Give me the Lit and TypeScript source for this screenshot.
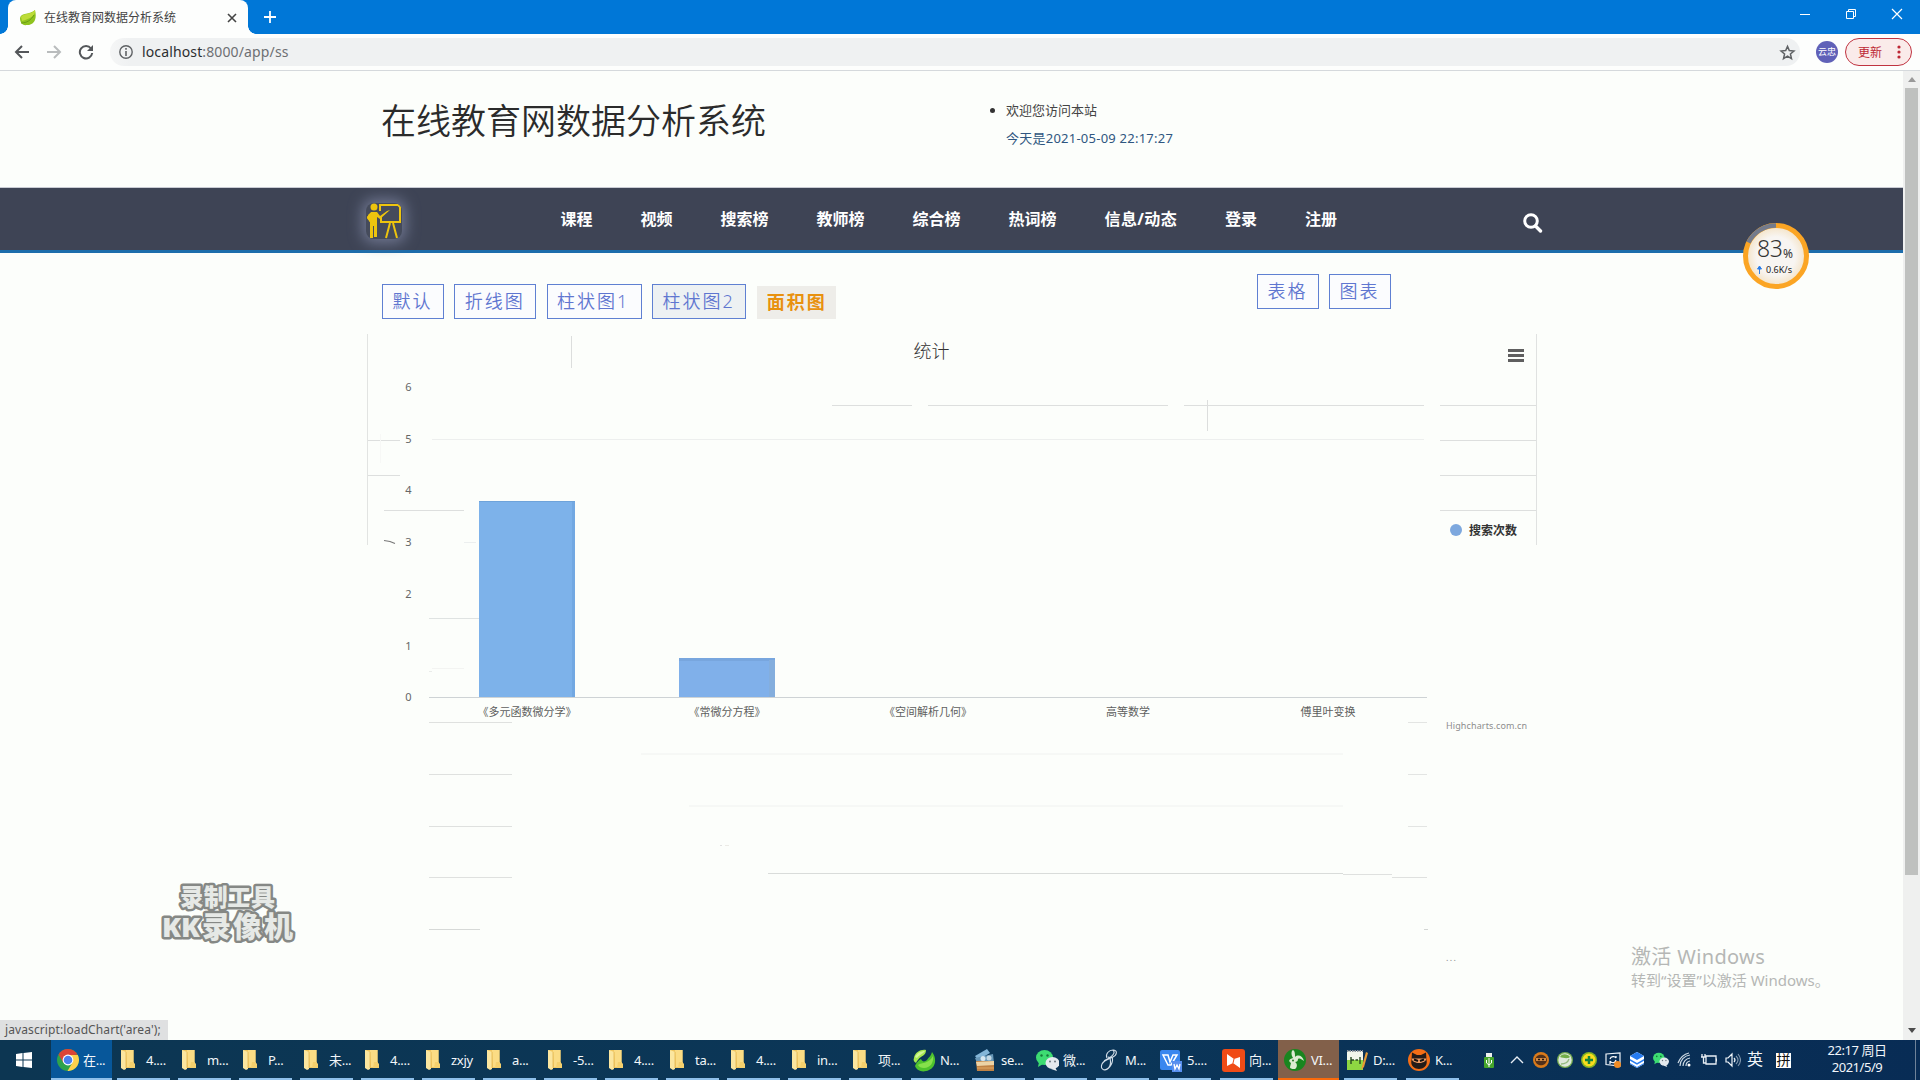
import { LitElement, html, css, svg } from "lit";
import { customElement } from "lit/decorators.js";

const folder = svg`<path d="M0 1h12.500v13l1.500 2v3H2z" fill="#f0c65f"/><path d="M5 1h7.500v12.500L14 15.500V18H6z" fill="#fbdc84"/><path d="M0 1l5 2v17l-2 1-3-2z" fill="#fbe69f"/><path d="M5 3v16" stroke="#e2b44e" stroke-width=".8"/><path d="M9 13h3.500l1.500 2.500V19H8z" fill="#f5d06d"/>`;
const wechat = svg`<ellipse cx="8.500" cy="8.500" rx="8.500" ry="7.500" fill="#3ddc72"/><path d="M3 13l-1 5 5-3z" fill="#3ddc72"/><circle cx="5.500" cy="6.500" r="1.200" fill="#17783a"/><circle cx="11.500" cy="6.500" r="1.200" fill="#17783a"/><ellipse cx="16.500" cy="14" rx="7" ry="6" fill="#e4e9ee"/><path d="M19 18l2 4-6-2z" fill="#e4e9ee"/><circle cx="14" cy="12.500" r="1" fill="#6b7780"/><circle cx="19" cy="12.500" r="1" fill="#6b7780"/>`;

const apps: Record<string, unknown> = {
  folder,
  wechat,
  chrome: svg`<circle cx="11" cy="11" r="11" fill="#2ea24c"/><path d="M1.500 5.500A11 11 0 0 1 20.500 5.500L11 7z" fill="#db4437"/><path d="M11 6h9.800A11 11 0 0 1 10.500 22L15.500 13.500z" fill="#fdd04c"/><path d="M1.500 5.500L6.500 14 11 6.500z" fill="#db4437"/><circle cx="11" cy="11" r="5.400" fill="#fff"/><circle cx="11" cy="11" r="4.300" fill="#4a7fee"/>`,
  navicat: svg`<path d="M1 9C2 3 8 0 13 1c0 4-2 5-5 7-2 1-4 4-5 6C1 13 0 11 1 9z" fill="#a6e84e"/><path d="M2 8C4 4 8 2 12 2c-2 3-6 4-8 7z" fill="#d3f69a"/><path d="M2 17c1-3 4-6 6-7 1 3 4 3 6 1 2-3 4-4 5-8 5 6 4 15-3 18-6 3-12 1-14-4z" fill="#4ec22d"/><path d="M5 16c4-3 11-1 15-9 1 7-3 12-9 12-3 0-5-1-6-3z" fill="#86e04b"/>`,
  server: svg`<path d="M1 7L13 0l3 4L4 11z" fill="#84b6d8"/><path d="M1 9l18-4 1 9H3z" fill="#6998b8"/><circle cx="9" cy="9.500" r="2.500" fill="#d7e7f0"/><circle cx="15" cy="9" r="2.500" fill="#c4d9e5"/><path d="M2 12h18v10H3z" fill="#bf8245"/><path d="M2 13l18-1v4L3 17z" fill="#ecd3a6"/><path d="M3 19h17" stroke="#e1a864"/>`,
  script: svg`<path d="M9 9C7 5 11 1 15 1c5 0 4 5 0 7-4 2-9 3-11 7-2 5 2 7 5 5 5-3 4-12 1-12M15 1c4 4-4 8-9 11M14 8c2 4-2 12-7 13" fill="none" stroke="#d2dde8" stroke-width="1.100"/>`,
  wps: svg`<rect x="0" y="1" width="20" height="20" rx="2" fill="#3987ef"/><path d="M3 6h5l2 7 3-7h4l-6 10H8z" fill="none" stroke="#fff" stroke-width="1.500"/><rect x="12" y="12" width="10" height="11" fill="#588fee"/><path d="M14 15l1 5 2-4 2 4 1-5" fill="none" stroke="#fff" stroke-width="1.300"/>`,
  remote: svg`<rect x="0" y="0" width="23" height="23" rx="3" fill="#f04b16"/><path d="M5 5l7 5 6-2v11l-7-5-6 3z" fill="#fff"/><path d="M11 14l1-4" stroke="#f04b16"/>`,
  rabbit: svg`<circle cx="11" cy="11" r="11" fill="#19861f"/><path d="M9 9C7 6 7 2 9 1c2 1 2 4 2 7 3-3 8-1 9 4-3-2-4-3-6-2 0 2-1 3-3 3 3 2 2 6 0 7-2 0-5 0-5-2l1-4c-3-2-2-4 2-5z" fill="#dcebd2"/><circle cx="9" cy="11.500" r="1" fill="#287a2a"/>`,
  notepad: svg`<path d="M1 2h16v19H1z" fill="#f1f6ea"/><path d="M1 11h16v10H1z" fill="#8ed742"/><path d="M1 2h16" stroke="#8b9299" stroke-width="2" stroke-dasharray="1.500 1"/><path d="M5 8v7M5 11h3m1.500 0H12m2-3v7" stroke="#274b21" stroke-width="1.400"/><path d="M16 17L20 3l2 1-4 14-3 3z" fill="#e69b35"/>`,
  cat: svg`<circle cx="11" cy="11" r="11" fill="#f46e16"/><path d="M3.500 11L4 3.500l5 2.500h4l5-2.500.500 7.500C20 17 15 20 11 20S2 17 3.500 11z" fill="#241b18"/><path d="M3.500 9.500h15c-1 6-14 6-15 0z" fill="#ef9c65"/><path d="M6 10.500l4 1.500M12 12l4-1.500" stroke="#111" stroke-width="2"/>`,
};

const tasks: [string, string, number][] = [
  ["folder", "4....", 117], ["folder", "m...", 178], ["folder", "P...", 239], ["folder", "未...", 300],
  ["folder", "4....", 361], ["folder", "zxjy", 422], ["folder", "a...", 483], ["folder", "-5...", 544],
  ["folder", "4....", 605], ["folder", "ta...", 666], ["folder", "4....", 727], ["folder", "in...", 788],
  ["folder", "项...", 849], ["navicat", "N...", 911], ["server", "se...", 972], ["wechat", "微...", 1034],
  ["script", "M...", 1096], ["wps", "5....", 1158], ["remote", "向...", 1220], ["rabbit", "VI...", 1282],
  ["notepad", "D:...", 1344], ["cat", "K...", 1406],
];

const tray = [
  svg`<rect x="5" y="1" width="6" height="4" fill="#eef1ee"/><rect x="3" y="5" width="10" height="11" rx="1" fill="#45a52b"/><path d="M8 6v9M5.500 8v3L8 13l2.500-2V8" fill="none" stroke="#fff"/>`,
  svg`<path d="M2 11l6-6 6 6" fill="none" stroke="#e8eef5" stroke-width="1.400"/>`,
  svg`<circle cx="8" cy="8" r="8" fill="#d97a1b"/><path d="M2 8c1-7 11-7 12 0-1 7-11 7-12 0z" fill="#51301b"/><path d="M3 6h10v3H3z" fill="#d58a42"/><path d="M5 7.500h2m2 0h2" stroke="#20140d" stroke-width="1.500"/>`,
  svg`<circle cx="8" cy="8" r="8" fill="#78ad50"/><circle cx="8" cy="8" r="6.700" fill="#dfe9dc"/><path d="M3 5C5 1 11 2 13 5c-2 2-7 1-10 0z" fill="#72ad48"/><path d="M4 12c4 0 7-2 8-5" stroke="#94ba80" stroke-width="1.300" fill="none"/>`,
  svg`<circle cx="8" cy="8" r="8" fill="#82b324"/><circle cx="8" cy="8" r="6.500" fill="#f8dc1d"/><path d="M8 4v8M4 8h8" stroke="#16843a" stroke-width="2.500"/>`,
  svg`<path d="M1 2l14-1v13L1 12.500z" fill="none" stroke="#eef4f9" stroke-width="1.200"/><path d="M5 7c1-3 5-3 6-1V4m0 4c-1 4-5 3-6 1v3" fill="none" stroke="#fff" stroke-width="1.200"/><circle cx="12.500" cy="12.500" r="3.500" fill="#f18c25"/>`,
  svg`<path d="M8 0l7 4v8l-7 4-7-4V4z" fill="#fff"/><path d="M8 0l7 4-7 4-7-4z" fill="#267bf0"/><path d="M1 7l7 4 7-4v1.800l-7 4-7-4zM1 11l7 4 7-4v1l-7 4-7-4z" fill="#267bf0"/>`,
  svg`<g transform="scale(.68)">${wechat}</g>`,
  svg`<path d="M3 14A11 11 0 0 1 13 3M6 14a8 8 0 0 1 7-8M9 14a5 5 0 0 1 4-5M1 11C3 6 7 2 12 1" fill="none" stroke="#cbd8e3" stroke-width="1.200"/><circle cx="12" cy="13" r="1.500" fill="#fff"/>`,
  svg`<path d="M5 12V4h10v8zM15.500 6.500v3M1 2v3h3V2M2.500 5v6H5M0 5h5" fill="none" stroke="#e8eef5" stroke-width="1.300"/>`,
  svg`<path d="M1 6h2l4-4v12l-4-4H1zM9 6q2 2 0 4" fill="none" stroke="#eef4f9" stroke-width="1.200"/><path d="M11 4q4 4 0 8M13 2q5 6 0 12" fill="none" stroke="#8197ad" stroke-width="1.100"/>`,
];

/* x1, y1, x2, y2, colour of each separator and grid rule */
const rules: [number, number, number, number, string][] = [
  [367.5, 334, 367.5, 545, "#e2e4e2"], [1536.5, 334, 1536.5, 545, "#e0e2e1"],
  [571.5, 336, 571.5, 368, "#dcdedd"], [1207.5, 400, 1207.5, 431, "#dcdedd"],
  [832, 405.5, 912, 405.5, "#dddfde"], [928, 405.5, 1168, 405.5, "#dddfde"],
  [1184, 405.5, 1424, 405.5, "#dddfde"], [1440, 405.5, 1536, 405.5, "#dddfde"],
  [368, 440.5, 400, 440.5, "#dddfde"], [368, 475.5, 400, 475.5, "#dddfde"],
  [384, 510.5, 464, 510.5, "#dddfde"], [1440, 440.5, 1536, 440.5, "#dddfde"],
  [1440, 475.5, 1536, 475.5, "#dddfde"], [1440, 510.5, 1536, 510.5, "#dddfde"],
  [432, 439.5, 1424, 439.5, "#edefee"], [464, 542.5, 476, 542.5, "#ecefef"],
  [380.5, 434, 380.5, 463, "#f7f8f6"], [429, 618.5, 479, 618.5, "#dfe3e2"],
  [432, 668.5, 464, 668.5, "#f3f4f2"], [429, 671.5, 432, 671.5, "#eaecea"],
  [429, 722.5, 512, 722.5, "#dfe1df"], [429, 774.5, 512, 774.5, "#dfe1df"],
  [429, 826.5, 512, 826.5, "#dfe1df"], [429, 877.5, 512, 877.5, "#dfe1df"],
  [429, 929.5, 480, 929.5, "#d6d9d7"], [641, 754, 1343, 754, "#f0f2f0"],
  [689, 806, 1343, 806, "#f0f2f0"], [768, 873.5, 1343, 873.5, "#d9dcda"],
  [1343, 874.5, 1392, 874.5, "#dfe1df"], [1392, 877.5, 1427, 877.5, "#dfe1df"],
  [1408, 722.5, 1427, 722.5, "#e3e5e3"], [1408, 774.5, 1427, 774.5, "#e3e5e3"],
  [1408, 826.5, 1427, 826.5, "#e3e5e3"], [1424, 929.5, 1428, 929.5, "#d3d6d4"],
  [720, 845.5, 722, 845.5, "#e2e2e2"], [725, 845.5, 729, 845.5, "#ecebe6"],
];

@customElement("stats-chart")
class StatsChart extends LitElement {
  static styles = css`
    :host { display: block; height: 706px; }
    svg { display: block; width: 1903px; height: 706px; font-family: "Noto Sans", "Noto Sans CJK SC", sans-serif; }
    .tick { font-size: 11px; fill: #666; text-anchor: middle; }
    .cat { font-size: 11px; fill: #5e5e5e; text-anchor: middle; }
    .title { font-size: 18px; fill: #333; text-anchor: middle; font-weight: 300; }
    .legend { font-size: 12px; font-weight: 600; fill: #333; }
    .credits { font-size: 9px; fill: #8d8d8d; }
  `;
  render() {
    const cats: [number, string, number][] = [
      [527, "《多元函数微分学》", 99], [727, "《常微分方程》", 77], [928, "《空间解析几何》", 88],
      [1128, "高等数学", 44], [1328, "傅里叶变换", 55],
    ];
    return html`<svg viewBox="0 334 1903 706">
      ${rules.map(([a, b, c, d, k]) => svg`<line x1=${a} y1=${b} x2=${c} y2=${d} stroke=${k} />`)}
      <text class="title" x="931.500" y="358">统计</text>
      <path d="M1508 350.500h16M1508 355.500h16M1508 360.500h16" stroke="#5f5f5f" stroke-width="3" />
      ${[6, 5, 4, 3, 2, 1, 0].map((n, i) => svg`<text class="tick" x="408.500" y=${391 + i * 51.7}>${n}</text>`)}
      <path d="M384 540.500l6 1 5 2" stroke="#777" stroke-width="1.200" fill="none" />
      <rect x="479" y="501" width="96" height="196" fill="#7db2ea" />
      <path d="M479 501.500h96" stroke="#6ea3da" /><path d="M573.500 502v195" stroke="#72a8e2" stroke-width="3" />
      <rect x="679" y="658" width="96" height="39" fill="#80b0ea" />
      <path d="M679 659.500h96" stroke="#78a6de" stroke-width="3" /><path d="M772 660v37" stroke="#84aedd" stroke-width="6" />
      <path d="M429 697.500h998" stroke="#ced3d5" />
      ${cats.map(([x, t, w]) => svg`<text class="cat" x=${x} y="716" textLength=${w}>${t}</text>`)}
      <circle cx="1456" cy="530" r="6" fill="#7da8de" />
      <text class="legend" x="1469" y="534.500">搜索次数</text>
      <text class="credits" x="1446" y="729" textLength="81">Highcharts.com.cn</text>
      <text class="credits" x="1446" y="961" textLength="10">...</text>
    </svg>`;
  }
}

@customElement("desktop-taskbar")
class DesktopTaskbar extends LitElement {
  static styles = css`
    :host { display: flex; height: 40px; color: #f2f6fa; background: linear-gradient(90deg, #0c3652, #0b3658 55%, #082c55); font: 13px "Noto Sans", "Noto Sans CJK SC", sans-serif; }
    .start { width: 51px; display: flex; align-items: center; padding-left: 16px; box-sizing: border-box; }
    .task { box-sizing: border-box; width: 53px; margin-right: 8px; height: 40px; border-bottom: 2px solid #8fc0ea; display: flex; align-items: center; gap: 4px; padding-left: 2px; white-space: nowrap; padding-top: 2px; }
    .task.wide { margin-right: 9px; }
    .task.fold { padding-left: 4px; gap: 10px; }
    .task.chrome { width: 61px; margin-right: 5px; padding-left: 6px; gap: 4px; background: #07579a; }
    .task.alert { width: 61px; margin-left: -4px; margin-right: 5px; padding-left: 6px; gap: 4px; background: #82604a; border-color: #fa6a0b; }
    .task svg { flex: none; }
    .label { letter-spacing: -0.3px; padding-bottom: 1px; }
    .tray { display: flex; align-items: center; gap: 8px; margin-left: 14px; }
    .tray svg { width: 16px; height: 16px; flex: none; }
    .tray svg:first-child { margin-right: 4px; }
    .ime { font-size: 16px; line-height: 16px; margin-left: -2px; padding-bottom: 2px; }
    .pin { width: 15px; height: 15px; background: #fff; color: #111; font-size: 14px; line-height: 14px; margin-left: 5px; text-align: center; }
    .clock { margin-left: 32px; width: 68px; text-align: center; line-height: 17px; font-size: 13px; letter-spacing: -0.45px; padding-top: 2px; white-space: nowrap; }
    .peek { width: 4px; border-left: 1px solid #6f8299; margin-left: auto; }
  `;
  render() {
    return html`
      <div class="start"><svg width="16" height="16"><path d="M0 2l6.500-1v6.500H0zM7.500 1L16 0v7.500H7.500zM0 8.500h6.500V15L0 14zM7.500 8.500H16V16l-8.500-1z" fill="#fff" /></svg></div>
      <div class="task chrome"><svg width="22" height="22">${apps.chrome}</svg><span class="label">在...</span></div>
      ${tasks.map(([icon, label, x], i) => {
        const next = tasks[i + 1];
        const kind = icon === "rabbit" ? "alert" : icon === "folder" ? "fold" : "";
        const wide = next && next[2] - x === 62 && kind !== "alert" ? "wide" : "";
        return html`<div class="task ${kind} ${wide}"><svg width=${icon === "folder" ? 15 : 23} height="23">${apps[icon]}</svg><span class="label">${label}</span></div>`;
      })}
      <div class="tray">${tray.map((t) => html`<svg viewBox="0 0 16 16">${t}</svg>`)}<span class="ime">英</span><span class="pin">拼</span></div>
      <div class="clock">22:17 周日<br />2021/5/9</div>
      <div class="peek"></div>`;
  }
}

@customElement("app-root")
class AppRoot extends LitElement {
  static styles = css`
    :host { display: flex; flex-direction: column; position: relative; width: 1920px; height: 1080px; overflow: hidden; background: #fcfefb; font-family: "Noto Sans", "Noto Sans CJK SC", sans-serif; color: #333; }
    .titlebar { height: 34px; background: #0077d7; display: flex; align-items: flex-start; flex: none; }
    .tab { position: relative; box-sizing: border-box; margin-left: 8px; width: 240px; height: 34px; background: #fdfefd; border-radius: 8px 8px 0 0; display: flex; align-items: center; padding: 1px 10px 0 12px; font-size: 12px; color: #444; }
    .tab::before, .tab::after { content: ""; position: absolute; bottom: 0; width: 8px; height: 8px; }
    .tab::before { left: -8px; background: radial-gradient(circle at 0 0, #0077d7 7.500px, #fdfefd 8px); }
    .tab::after { right: -8px; background: radial-gradient(circle at 100% 0, #0077d7 7.500px, #fdfefd 8px); }
    .tab span { margin-left: 8px; flex: 1; white-space: nowrap; padding-bottom: 1px; }
    .plus { margin: 11px 0 0 16px; }
    .winbtns { margin: 7px 17px 0 auto; display: flex; gap: 34px; }
    .toolbar { box-sizing: border-box; height: 37px; flex: none; border-bottom: 1px solid #d5d9dc; display: flex; align-items: center; padding: 0 8px 0 14px; background: #fdfefd; }
    .navicons { display: flex; gap: 16px; width: 96px; }
    .omnibox { flex: 1; height: 28px; margin-right: 16px; border-radius: 14px; background: linear-gradient(90deg, #f5f6f6, #eff1f2 20px); display: flex; align-items: center; padding: 0 4px 0 9px; }
    .omnibox .url { margin-left: 9px; font-size: 14px; color: #6d6f72; flex: 1; letter-spacing: 0.13px; padding-bottom: 1px; }
    .omnibox b { font-weight: 400; color: #2c2e30; }
    .avatar { width: 22px; height: 22px; border-radius: 50%; background: #6061b8; color: #fff; font-size: 9px; line-height: 22px; text-align: center; margin-right: 7px; }
    .update { box-sizing: border-box; width: 67px; height: 28px; border: 1px solid #c03340; border-radius: 14px; background: #faebea; color: #bd2734; font-size: 12px; display: flex; align-items: center; padding: 0 10px 0 12px; justify-content: space-between; }
    .viewport { display: flex; height: 969px; flex: none; }
    .page { width: 1903px; flex: none; }
    .header { height: 116px; display: flex; box-sizing: border-box; padding-left: 381px; }
    h1 { margin: 22px 0 0; width: 586px; font-size: 35px; line-height: 52px; font-family: "Noto Sans CJK SC", sans-serif; font-weight: 350; color: #2b2b2b; }
    .welcome { margin: 25px 0 0; padding: 0 0 0 39px; font-size: 13px; line-height: 28px; }
    .welcome li { color: #444; }
    .welcome li::marker { color: #333; }
    .date { color: #2f5680; letter-spacing: 0.24px; }
    .nav { height: 66px; box-sizing: border-box; background: #3e4455; border-top: 1px solid #c9ccd4; border-bottom: 3px solid #1d6dab; display: flex; align-items: center; }
    .logo { margin-left: 366px; margin-top: 3px; width: 36px; height: 36px; border-radius: 8px; box-shadow: 0 0 14px 4px #6f7690; background: #454b5b; }
    .menu { margin-left: 158.500px; display: flex; gap: 48px; color: #fff; font-size: 16px; font-weight: 700; width: 962px; padding-bottom: 3px; }
    .menu span:nth-child(7) { letter-spacing: 0.35px; }
    .search { margin-top: 6px; }
    .switches { height: 81px; display: flex; justify-content: space-between; width: 1009px; margin-left: 382px; }
    .group { display: flex; gap: 10.300px; align-items: flex-start; }
    .left { padding-top: 31px; }
    .right { padding-top: 21px; gap: 10px; }
    .btn { box-sizing: border-box; height: 35px; border: 1px solid #5f80d2; color: #5f76d0; background: #fbfcfe; font-size: 18px; line-height: 32px; letter-spacing: 2px; padding: 0 9.500px; font-weight: 350; white-space: nowrap; font-family: "Noto Sans", "Noto Sans CJK SC", sans-serif; min-width: 62px; }
    .left .btn:nth-child(2) { width: 82px; }
    .left .btn:nth-child(3) { width: 95px; }
    .btn.hover { background: #edf1f3; width: 94px; }
    .btn.active { border: 0; color: #e8910f; font-weight: 700; background: #eeede9; margin: 2px 0 0 1px; height: 33px; width: 79px; }
    .scroll { width: 17px; background: #eff0ef; display: flex; flex-direction: column; align-items: center; }
    .thumb { width: 13px; height: 787px; background: #bfc1bf; margin-top: 6px; }
    .scroll .up { margin-top: 6px; }
    .scroll .down { margin-top: auto; margin-bottom: 7px; }
    .status { position: absolute; left: 0; top: 1020px; height: 20px; width: 168px; box-sizing: border-box; padding-left: 5px; background: #dfe0e1; color: #555; font-size: 12px; line-height: 19px; white-space: nowrap; letter-spacing: 0.1px; }
    .ball { position: absolute; left: 1743px; top: 223px; }
    .mark { position: absolute; left: 153px; top: 874px; }
    .activate { position: absolute; left: 1631px; top: 943px; color: #b5b7b5; white-space: nowrap; font-weight: 400; }
    .activate .big { font-size: 20px; line-height: 28px; letter-spacing: 0.35px; }
    .activate .small { font-size: 15px; line-height: 18px; }
    svg text { font-family: "Noto Sans", "Noto Sans CJK SC", sans-serif; }
  `;
  render() {
    const menu = ["课程", "视频", "搜索榜", "教师榜", "综合榜", "热词榜", "信息/动态", "登录", "注册"];
    return html`
      <div class="titlebar">
        <div class="tab">
          <svg width="16" height="16"><path d="M0 8C1 2 10 5 15 0c2 8 0 15-8 15C2 16 0 12 0 8z" fill="#8fc31f" /><path d="M1 7C3 3 11 5 15 0c1 6-6 9-13 11z" fill="#bddc38" /><path d="M1 13c6 0 10-3 13-8" fill="none" stroke="#6b9d14" /></svg>
          <span>在线教育网数据分析系统</span>
          <svg width="12" height="12"><path d="M2 2l8 8M10 2l-8 8" stroke="#444" stroke-width="1.600" /></svg>
        </div>
        <svg class="plus" width="12" height="12"><path d="M6 0v12M0 6h12" stroke="#fff" stroke-width="1.800" /></svg>
        <div class="winbtns">
          <svg width="12" height="14"><path d="M1 7.500h10" stroke="#fff" /></svg>
          <svg width="12" height="14"><path d="M1.500 4.500h7v7h-7zM3.500 4V2.500h7v7H9" fill="none" stroke="#fff" /></svg>
          <svg width="12" height="14"><path d="M1 2l10 10M11 2L1 12" stroke="#fff" stroke-width="1.200" /></svg>
        </div>
      </div>
      <div class="toolbar">
        <div class="navicons">
          <svg width="16" height="16"><path d="M15 8H2M8 2L2 8l6 6" fill="none" stroke="#54575a" stroke-width="2" /></svg>
          <svg width="16" height="16"><path d="M1 8h13M8 2l6 6-6 6" fill="none" stroke="#b9bcbd" stroke-width="2" /></svg>
          <svg width="16" height="16"><path d="M13 4.500A6.200 6.200 0 1 0 14.200 9" fill="none" stroke="#54575a" stroke-width="2" /><path d="M15 1v6H9z" fill="#54575a" /></svg>
        </div>
        <div class="omnibox">
          <svg width="14" height="14"><circle cx="7" cy="7" r="6.200" fill="none" stroke="#5f6265" stroke-width="1.400" /><path d="M7 6v5M7 3v1.700" stroke="#5f6265" stroke-width="1.600" /></svg>
          <span class="url"><b>localhost</b>:8000/app/ss</span>
          <svg width="17" height="17" viewBox="0 0 18 18"><path d="M9 2.500l1.900 4.500 4.900.4-3.700 3.200 1.100 4.800L9 12.800l-4.200 2.600 1.100-4.800-3.700-3.200 4.900-.4z" fill="none" stroke="#5f6265" stroke-width="1.600" /></svg>
        </div>
        <div class="avatar">云忠</div>
        <div class="update">更新<svg width="4" height="14"><circle cx="2" cy="2" r="1.600" fill="#bd2734" /><circle cx="2" cy="7" r="1.600" fill="#bd2734" /><circle cx="2" cy="12" r="1.600" fill="#bd2734" /></svg></div>
      </div>
      <div class="viewport">
        <div class="page">
          <div class="header">
            <h1>在线教育网数据分析系统</h1>
            <ul class="welcome"><li>欢迎您访问本站</li><div class="date">今天是2021-05-09 22:17:27</div></ul>
          </div>
          <div class="nav">
            <svg class="logo" viewBox="0 0 36 36">
              <circle cx="8" cy="4" r="3.500" fill="#edc40e" />
              <path d="M5 9h6l3 4 7-5 3-1-10 9-3-2v20H8V23H7v12H4V19l-3-5z" fill="#edc40e" />
              <path d="M4 11l-2 4 3 4" fill="none" stroke="#edc40e" stroke-width="2" />
              <path d="M14 8V2h18l2 2v15H15v-5M24 20l-4 15M27 20l4 15" fill="none" stroke="#edc40e" stroke-width="2" />
            </svg>
            <div class="menu">${menu.map((m) => html`<span>${m}</span>`)}</div>
            <svg class="search" width="20" height="22" viewBox="0 0 20 22"><circle cx="8" cy="10" r="6.300" fill="none" stroke="#fff" stroke-width="3" /><path d="M12.500 15l5 5" stroke="#fff" stroke-width="3.400" stroke-linecap="round" /></svg>
          </div>
          <div class="switches">
            <div class="group left">
              <div class="btn">默认</div><div class="btn">折线图</div><div class="btn">柱状图1</div><div class="btn hover">柱状图2</div><div class="btn active">面积图</div>
            </div>
            <div class="group right"><div class="btn">表格</div><div class="btn">图表</div></div>
          </div>
          <stats-chart></stats-chart>
        </div>
        <div class="scroll">
          <svg class="up" width="8" height="5"><path d="M0 5l4-5 4 5z" fill="#999" /></svg>
          <div class="thumb"></div>
          <svg class="down" width="8" height="5"><path d="M0 0l4 5 4-5z" fill="#4c4c4c" /></svg>
        </div>
      </div>
      <desktop-taskbar></desktop-taskbar>

      <div class="status">javascript:loadChart('area');</div>
      <svg class="ball" width="66" height="66">
        <defs><radialGradient id="face"><stop offset="0.600" stop-color="#f8f5f2" /><stop offset="1" stop-color="#f3dfbd" /></radialGradient></defs>
        <circle cx="33" cy="33" r="32" fill="url(#face)" />
        <circle cx="33" cy="33" r="30.500" fill="none" stroke="#fba524" stroke-width="5" />
        <path d="M5.500 19.500A30.500 30.500 0 0 1 33 2.500" fill="none" stroke="#747b8c" stroke-width="4.500" />
        <text x="14" y="34" font-size="23" font-weight="300" fill="#333" textLength="26">83</text>
        <text x="40" y="34.500" font-size="12" fill="#333" textLength="10">%</text>
        <path d="M16.500 51v-7M14.500 46l2-3 2 3z" stroke="#2a7de8" fill="#2a7de8" />
        <text x="23" y="50" font-size="9" fill="#222" textLength="26">0.6K/s</text>
      </svg>
      <svg class="mark" width="150" height="80">
        <g fill="#e6e9e6" stroke="#858885" stroke-width="5" paint-order="stroke" stroke-linejoin="round" font-weight="900">
          <text x="27" y="32" font-size="24" textLength="95">录制工具</text>
          <text x="9" y="63" font-size="26" textLength="38" lengthAdjust="spacingAndGlyphs">KK</text>
          <text x="49" y="64" font-size="29" textLength="91">录像机</text>
        </g>
      </svg>
      <div class="activate"><div class="big">激活 Windows</div><div class="small">转到“设置”以激活 Windows。</div></div>
    `;
  }
}
